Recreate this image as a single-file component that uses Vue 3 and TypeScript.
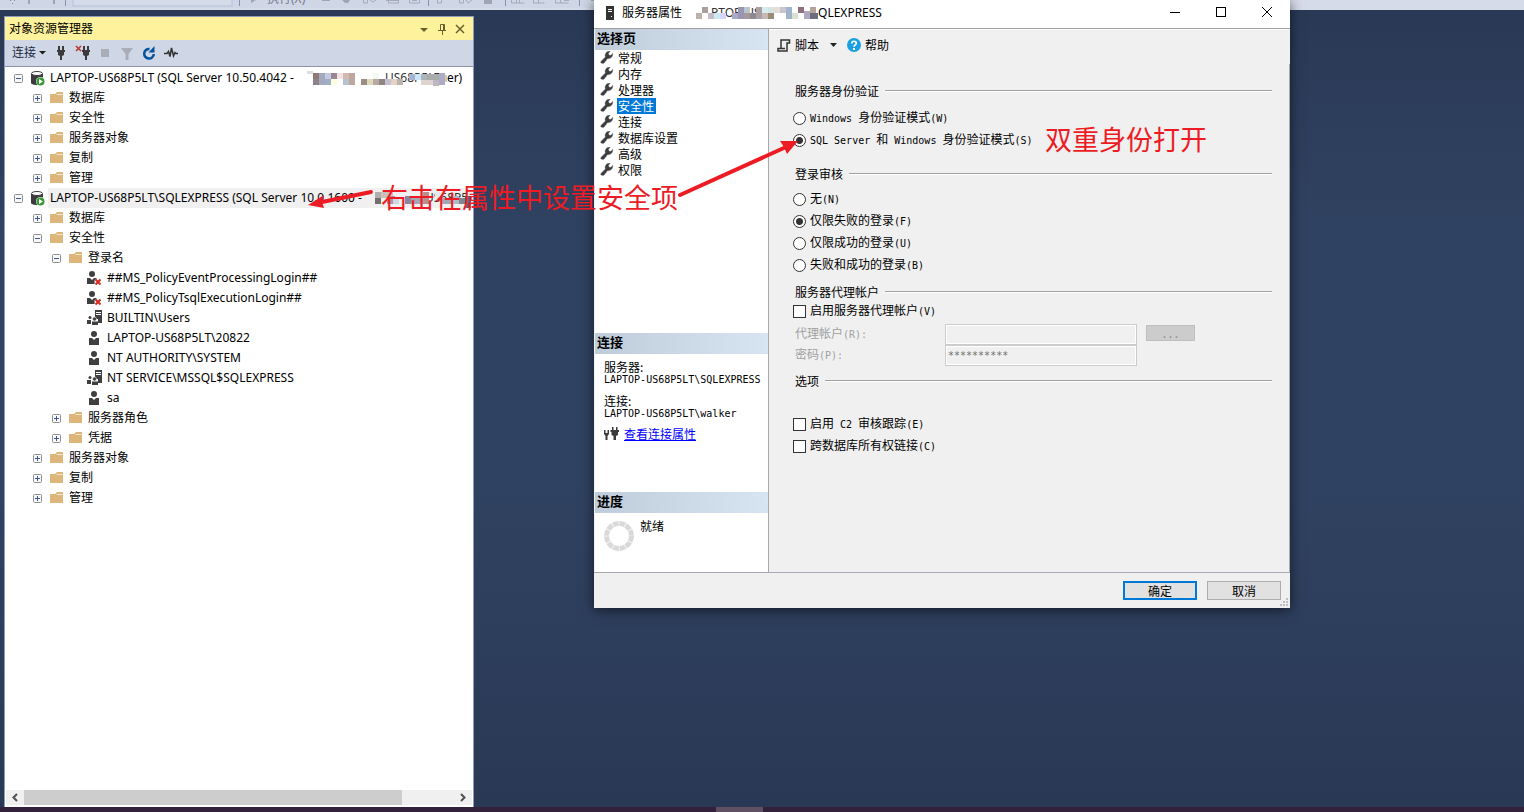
<script setup lang="ts">
import { ref } from 'vue'

type Kind = 'server' | 'folder' | 'user' | 'denied' | 'group'
type Tile = [number, number, number, number, string]
interface Node {
  level: number
  kind: Kind
  label: string
  open?: boolean
  tail?: string
  hidden?: string
  tiles?: Tile[]
  selected?: boolean
}

const firstTiles: Tile[] = [
  [0, 3, 6, 3, '#dddde3'], [6, 5, 6, 6, '#8f7a77'], [12, 5, 6, 12, '#a4a9bd'], [18, 5, 6, 6, '#c3cbe0'],
  [6, 11, 6, 6, '#8d8288'], [18, 11, 6, 6, '#9fb0c4'], [24, 5, 6, 6, '#9a8796'], [24, 11, 6, 6, '#fdfde0'],
  [36, 5, 6, 6, '#d6b9ae'], [36, 11, 6, 6, '#b5c4d0'], [42, 5, 6, 12, '#bda79f'], [30, 5, 6, 6, '#f1e3e1'],
  [54, 11, 6, 6, '#9b8d83'], [60, 11, 6, 6, '#e0dabd'], [66, 5, 6, 6, '#f2faf0'], [66, 11, 6, 6, '#b7a7a6'],
  [72, 11, 6, 6, '#8f877f'], [78, 11, 6, 6, '#c5bfd3'], [84, 11, 6, 6, '#e5d2c7'], [90, 11, 6, 6, '#b9b4ac'],
  [102, 6, 6, 6, '#a5b5cf'], [108, 6, 6, 6, '#cbe5fb'], [114, 6, 6, 6, '#abb5ba'], [120, 6, 12, 6, '#a9ada9'],
  [114, 12, 12, 5, '#dfd3cf'], [126, 12, 6, 6, '#bdb7c1'], [132, 5, 6, 12, '#b0abc4'], [138, 7, 5, 7, '#c9cdbb'],
]
const secondTiles: Tile[] = [
  [0, 4, 6, 6, '#b2aeab'], [0, 10, 6, 6, '#736d6c'], [6, 4, 12, 6, '#cdbfbd'], [12, 8, 8, 8, '#a89a9c'],
  [18, 10, 6, 6, '#cfd7e6'], [30, 8, 6, 8, '#8a86a0'], [36, 10, 12, 6, '#a7a4b5'], [48, 4, 6, 12, '#b4918e'],
  [60, 4, 6, 6, '#e5eaf0'], [66, 10, 12, 6, '#a3a7b3'], [78, 8, 6, 8, '#a9bcc9'], [84, 10, 6, 6, '#7f8791'],
  [90, 8, 6, 12, '#566682'],
]
const titleTiles: Tile[] = [
  [0, 7, 6, 6, '#bcb1ab'], [6, 1, 6, 6, '#a99f9e'], [12, 7, 6, 6, '#c5bccb'], [18, 7, 6, 6, '#cbebee'],
  [24, 7, 6, 6, '#d4d6fb'], [36, 7, 6, 6, '#aca8c7'], [42, 1, 6, 12, '#9b94b3'], [48, 1, 6, 6, '#b6c6cf'],
  [48, 7, 6, 6, '#a6999a'], [54, 7, 6, 6, '#8f8792'], [60, 1, 6, 12, '#a99fa5'], [66, 1, 6, 6, '#d9ecec'],
  [66, 7, 6, 6, '#c8b8b2'], [72, 1, 6, 6, '#d6e4e4'], [72, 7, 6, 6, '#9b8b7a'], [78, 1, 6, 6, '#e7ddd6'],
  [84, 1, 6, 6, '#c6c6ce'], [90, 1, 6, 12, '#a0b4cd'], [96, 7, 6, 6, '#dfdfd1'], [102, 1, 6, 6, '#8d707a'],
  [108, 5, 6, 8, '#b0a8c0'], [114, 1, 6, 6, '#b3a59b'], [114, 7, 8, 6, '#6f6e7b'], [30, 19, 16, 2, '#e8eef5'],
]

const nodes = ref<Node[]>([
  { level: 0, kind: 'server', open: true, label: 'LAPTOP-US68P5LT (SQL Server 10.50.4042 - ', tiles: firstTiles, hidden: 'US68P5LT\\', tail: 'er)' },
  { level: 1, kind: 'folder', open: false, label: '数据库' },
  { level: 1, kind: 'folder', open: false, label: '安全性' },
  { level: 1, kind: 'folder', open: false, label: '服务器对象' },
  { level: 1, kind: 'folder', open: false, label: '复制' },
  { level: 1, kind: 'folder', open: false, label: '管理' },
  { level: 0, kind: 'server', open: true, selected: true, label: 'LAPTOP-US68P5LT\\SQLEXPRESS (SQL Server 10.0.1600 - ', tiles: secondTiles, hidden: 'US68P5', tail: '' },
  { level: 1, kind: 'folder', open: false, label: '数据库' },
  { level: 1, kind: 'folder', open: true, label: '安全性' },
  { level: 2, kind: 'folder', open: true, label: '登录名' },
  { level: 3, kind: 'denied', label: '##MS_PolicyEventProcessingLogin##' },
  { level: 3, kind: 'denied', label: '##MS_PolicyTsqlExecutionLogin##' },
  { level: 3, kind: 'group', label: 'BUILTIN\\Users' },
  { level: 3, kind: 'user', label: 'LAPTOP-US68P5LT\\20822' },
  { level: 3, kind: 'user', label: 'NT AUTHORITY\\SYSTEM' },
  { level: 3, kind: 'group', label: 'NT SERVICE\\MSSQL$SQLEXPRESS' },
  { level: 3, kind: 'user', label: 'sa' },
  { level: 2, kind: 'folder', open: false, label: '服务器角色' },
  { level: 2, kind: 'folder', open: false, label: '凭据' },
  { level: 1, kind: 'folder', open: false, label: '服务器对象' },
  { level: 1, kind: 'folder', open: false, label: '复制' },
  { level: 1, kind: 'folder', open: false, label: '管理' },
])

const pages = ['常规', '内存', '处理器', '安全性', '连接', '数据库设置', '高级', '权限']
const page = ref('安全性')

const authModes = ['Windows 身份验证模式(W)', 'SQL Server 和 Windows 身份验证模式(S)']
const auth = ref(authModes[1])
const auditModes = ['无(N)', '仅限失败的登录(F)', '仅限成功的登录(U)', '失败和成功的登录(B)']
const audit = ref(auditModes[1])
const proxyEnabled = ref(false)
const password = ref('**********')
const account = ref('')
const options = ['启用 C2 审核跟踪(E)', '跨数据库所有权链接(C)']
const chosen = ref<string[]>([])

// Splits a label into Latin and Chinese runs; Latin runs use a half-width face.
function runs(text: string) {
  return (text.match(/[\x20-\x7e]+|[^\x20-\x7e]+/g) ?? []).map((t) => ({ t, latin: t.charCodeAt(0) < 127 }))
}
</script>

<template>
  <div class="desktop">
    <header class="topbar">
      <svg width="606" height="10" aria-hidden="true">
        <rect width="606" height="8" fill="#cfd6e5" />
        <g fill="#7d87a0"><rect x="10" y="0" width="1" height="1" /><rect x="14" y="0" width="1" height="1" /><rect x="12" y="3" width="1" height="1" /></g>
        <g fill="#9fa5b3">
          <rect x="28" width="2" height="4" /><rect x="53" width="2" height="4" />
          <path d="M251 0h5l-5 3z" /><rect x="322" width="8" height="1" /><path d="M342 0h8l-2 3h-3z" />
          <rect x="484" width="8" height="4" />
        </g>
        <rect x="73" y="-4" width="159" height="10" fill="#d5dbe9" stroke="#b4c3da" />
        <g fill="#8591ac"><rect x="65" width="1" height="6" /><rect x="239" width="1" height="6" /><rect x="428" width="1" height="6" /><rect x="505" width="1" height="6" /><rect x="579" width="1" height="6" /></g>
        <g fill="none" stroke="#a5abb8">
          <path d="M363.500 0v3h4V0M370 0l3 2 3-2M386 .500h13M388.500 0v3h10V0M409.500 0v3h10V0M412 .500h5M437.500 0v3h4V0M459.500 0v3h4V0M466 0l2 3 4-3" />
          <path d="M511.500 0v3h13M516.500 0v3M519.500 0v3M533.500 0v3h11M538.500 0v3M555.500 0v3h13M560.500 0v3M564 .500h5M591 .500h9" />
        </g>
        <text x="267" y="3" class="run">执行(X)</text>
      </svg>
    </header>

    <main class="workspace">
      <section class="explorer">
        <div class="caption">
          <h1>对象资源管理器</h1>
          <button type="button" aria-label="窗口位置"><svg width="10" height="12"><path d="M1 5h8l-4 4z" fill="#6b5f2e" /></svg></button>
          <button type="button" aria-label="自动隐藏"><svg width="10" height="12" fill="none" stroke="#6b5f2e"><path d="M3.500 7V1.500h4V7M6.500 2v5M1 7.500h8M5.500 8v4" /></svg></button>
          <button type="button" aria-label="关闭"><svg width="10" height="12" fill="none" stroke="#6b5f2e" stroke-width="1.500"><path d="M1 2l8 8M9 2l-8 8" /></svg></button>
        </div>
        <div class="tools">
          <button type="button" class="connect">连接<svg width="7" height="4"><path d="M0 0h7L3.500 3.500z" fill="#1e1e1e" /></svg></button>
          <button type="button" aria-label="连接服务器"><svg width="16" height="16" fill="#3b3b3b"><path d="M5 1h2v4h2V1h2v4h1v2h-1v3L9 11v4H7v-4l-2-1V7H4V5h1z" /></svg></button>
          <button type="button" aria-label="断开连接"><svg width="16" height="16" fill="#3b3b3b"><path d="M8 1h2v4h2V1h2v4h1v2h-1v3l-2 1v4h-2v-4l-2-1V7H7V5h1z" /><path d="M1 1l5 5M6 1L1 6" stroke="#b8352a" stroke-width="1.500" /></svg></button>
          <button type="button" aria-label="停止"><svg width="16" height="16"><rect x="4" y="4" width="8" height="8" fill="#a9adb8" /></svg></button>
          <button type="button" aria-label="筛选"><svg width="16" height="16"><path d="M2 3h12L9.500 9v6h-3V9z" fill="#a9adb8" /></svg></button>
          <button type="button" aria-label="刷新"><svg width="16" height="16"><path d="M8.500 4A4.800 4.800 0 1 0 12.800 9" fill="none" stroke="#00539c" stroke-width="2.500" /><path d="M13.500 1v6.500H7.500z" fill="#00539c" /></svg></button>
          <button type="button" aria-label="活动监视器"><svg width="16" height="16"><path d="M1 8.500h3l1.500-2 1.500 5L8.500 3l2 8 1.500-3.500 1 1h2" fill="none" stroke="#333" stroke-width="1.500" /></svg></button>
        </div>
        <ul class="tree" role="tree">
          <li v-for="(node, i) in nodes" :key="i" role="treeitem" class="row" :class="'level-' + node.level">
            <button v-if="node.open !== undefined" type="button" class="expander" :aria-label="node.open ? '折叠' : '展开'">
              <svg width="9" height="9"><rect x=".5" y=".5" width="8" height="8" rx="1" fill="#f8f8f8" stroke="#8f8f8f" /><path :d="node.open ? 'M2 4.500h5' : 'M2 4.500h5M4.500 2v5'" stroke="#3b569c" /></svg>
            </button>
            <span v-else class="expander" />
            <svg class="icon" width="16" height="16" aria-hidden="true">
              <g v-if="node.kind === 'folder'"><path d="M1 4h5l2-2h6v11H1z" fill="#dcb67a" /><path d="M7.500 4.500h6" stroke="#f6e7cb" /></g>
              <g v-else-if="node.kind === 'server'">
                <path d="M1 4v9c0 1 3 2 6 2s6-1 6-2V4z" fill="#3b3b3b" />
                <ellipse cx="7" cy="3.500" rx="5.500" ry="2" fill="#fff" stroke="#3b3b3b" />
                <circle cx="10.500" cy="11.500" r="4.500" fill="#fff" /><circle cx="10.500" cy="11.500" r="4" fill="#36982f" />
                <path d="M9 9v5l4-2.500z" fill="#fff" />
              </g>
              <g v-else-if="node.kind === 'group'" fill="#3f3f3f">
                <path d="M8 0h7v13h-4V9H8z" /><path d="M9 2.500h5M9 4.500h5" stroke="#fff" />
                <circle cx="3" cy="7.500" r="1.500" /><circle cx="7.500" cy="9" r="2" stroke="#fff" stroke-width=".5" />
                <path d="M0 10h5v4H0zM5 11.500h6V15H5z" /><path d="M4.500 9.500V14" stroke="#fff" />
              </g>
              <g v-else fill="#3f3f3f">
                <circle :cx="node.kind === 'user' ? 7 : 5" cy="4" r="3" />
                <path v-if="node.kind === 'user'" d="M2 8h3l2 2 2-2h3v7H2z" />
                <path v-else d="M0 8h3l2 2 2-2h3v6H0z" />
                <path v-if="node.kind === 'denied'" d="M8.500 9.500l5 5M13.500 9.500l-5 5" stroke="#fff" stroke-width="4" />
                <path v-if="node.kind === 'denied'" d="M8.500 9.500l5 5M13.500 9.500l-5 5" stroke="#d8291c" stroke-width="2" />
              </g>
            </svg>
            <span class="label" :class="{ selected: node.selected }">{{ node.label }}<svg v-if="node.tiles" class="mosaic" :width="node.tail ? 140 : 100" height="20" aria-hidden="true">
              <text :x="node.tail ? 78 : 50" y="14" class="under">{{ node.hidden }}</text>
              <rect v-for="(t, k) in node.tiles" :key="k" :x="t[0]" :y="t[1]" :width="t[2]" :height="t[3]" :fill="t[4]" />
            </svg>{{ node.tail }}</span>
          </li>
        </ul>
        <div class="scroll">
          <svg width="18" height="15" fill="none" stroke="#505050" stroke-width="2"><path d="M11 4L7.500 7.500 11 11" /></svg>
          <div class="track"><div class="thumb" /></div>
          <svg width="18" height="15" fill="none" stroke="#505050" stroke-width="2"><path d="M7 4l3.500 3.500L7 11" /></svg>
        </div>
      </section>
    </main>

    <footer class="taskbar"><span /></footer>

    <section class="dialog" role="dialog" aria-label="服务器属性">
      <div class="titlebar">
        <svg width="8" height="14" aria-hidden="true"><rect width="8" height="14" fill="#333" /><path d="M2 3.500h4M2 5.500h4" stroke="#fff" /><rect x="5" y="10" width="1" height="1" fill="#fff" /></svg>
        <h2>服务器属性</h2>
        <svg class="title-mosaic" width="122" height="22" aria-hidden="true">
          <text x="15" y="14" class="under">PTOP-US</text>
          <rect v-for="(t, k) in titleTiles" :key="k" :x="t[0]" :y="t[1] + 3" :width="t[2]" :height="t[3]" :fill="t[4]" />
        </svg>
        <span class="instance">QLEXPRESS</span>
        <div class="window-buttons">
          <button type="button" aria-label="最小化"><svg width="10" height="10"><path d="M0 5.500h10" stroke="#000" /></svg></button>
          <button type="button" aria-label="最大化"><svg width="10" height="10"><rect x=".5" y=".5" width="9" height="9" fill="none" stroke="#000" /></svg></button>
          <button type="button" aria-label="关闭"><svg width="10" height="10"><path d="M0 0l10 10M10 0L0 10" stroke="#000" /></svg></button>
        </div>
      </div>

      <div class="body">
        <aside class="side">
          <section class="pane pages">
            <h3>选择页</h3>
            <ul>
              <li v-for="p in pages" :key="p">
                <svg width="14" height="14" aria-hidden="true"><path d="M1 10.500L5.500 6C4.500 3 6.500 0 10 .2L8.300 2.500l.7 1.800 2 .2L12.500 2.600c.6 3-2 5.500-5 4.800L4 12c-1.500 1-4-.2-3-1.500z" fill="#3d3d3d" stroke="#3d3d3d" stroke-width=".5" /></svg>
                <button type="button" :class="{ active: p === page }" @click="page = p">{{ p }}</button>
              </li>
            </ul>
          </section>
          <section class="pane connection">
            <h3>连接</h3>
            <dl>
              <dt>服务器:</dt><dd>LAPTOP-US68P5LT\SQLEXPRESS</dd>
              <dt>连接:</dt><dd>LAPTOP-US68P5LT\walker</dd>
            </dl>
            <p>
              <svg width="15" height="14" fill="#3b3b3b" aria-hidden="true"><path d="M0 3h1.500v3h2V3H5v4L3.500 9v4h-2V9L0 7zM8 0h1.500v3H12V0h1.500v3H15v2h-1v3l-2 1v4h-2.500V9l-2-1V5h-1V3H8z" /></svg>
              <a href="#">查看连接属性</a>
            </p>
          </section>
          <section class="pane progress">
            <h3>进度</h3>
            <p>
              <svg width="30" height="30" aria-hidden="true"><circle cx="15" cy="15" r="12.500" fill="none" stroke="#d9d9d9" stroke-width="5" stroke-dasharray="5.800 .745" /></svg>
              <span>就绪</span>
            </p>
          </section>
        </aside>

        <div class="content">
          <div class="actions">
            <button type="button"><svg width="14" height="13" fill="none" stroke="#333" stroke-width="1.500"><path d="M4 9V1h8.500v3H10v8H1V9.500h7" /></svg>脚本</button>
            <button type="button" class="drop" aria-label="脚本选项"><svg width="7" height="4"><path d="M0 0h7L3.500 4z" fill="#222" /></svg></button>
            <button type="button" class="help"><svg width="14" height="14"><circle cx="7" cy="7" r="7" fill="#1ba1e2" /><path d="M4.800 5.500C4.800 2.500 9.300 2.600 9.300 5.200 9.300 7 7 6.800 7 8.800" fill="none" stroke="#fff" stroke-width="1.700" /><rect x="6" y="10" width="2" height="2" fill="#fff" /></svg>帮助</button>
          </div>
          <form class="form" @submit.prevent>
            <h4>服务器身份验证</h4>
            <div class="set auth">
              <label v-for="m in authModes" :key="m"><input v-model="auth" type="radio" name="auth" :value="m"><span class="mixed"><span v-for="(r, k) in runs(m)" :key="k" :class="{ latin: r.latin }">{{ r.t }}</span></span></label>
            </div>
            <h4>登录审核</h4>
            <div class="set audit">
              <label v-for="m in auditModes" :key="m"><input v-model="audit" type="radio" name="audit" :value="m"><span class="mixed"><span v-for="(r, k) in runs(m)" :key="k" :class="{ latin: r.latin }">{{ r.t }}</span></span></label>
            </div>
            <h4>服务器代理帐户</h4>
            <div class="set">
              <label><input v-model="proxyEnabled" type="checkbox"><span class="mixed"><span v-for="(r, k) in runs('启用服务器代理帐户(V)')" :key="k" :class="{ latin: r.latin }">{{ r.t }}</span></span></label>
            </div>
            <div class="fields">
              <label for="account">代理帐户<span class="latin">(R):</span></label>
              <input id="account" v-model="account" type="text" disabled>
              <button type="button" disabled>. . .</button>
              <label for="password">密码<span class="latin">(P):</span></label>
              <input id="password" v-model="password" type="text" disabled>
            </div>
            <h4>选项</h4>
            <div class="set options">
              <label v-for="o in options" :key="o"><input v-model="chosen" type="checkbox" :value="o"><span class="mixed"><span v-for="(r, k) in runs(o)" :key="k" :class="{ latin: r.latin }">{{ r.t }}</span></span></label>
            </div>
          </form>
        </div>
      </div>

      <div class="commands">
        <button type="button" class="ok">确定</button>
        <button type="button">取消</button>
        <svg class="grip" width="8" height="8" fill="#bfbfbf" aria-hidden="true"><path d="M6 0h2v2H6zM3 3h2v2H3zM6 3h2v2H6zM0 6h2v2H0zM3 6h2v2H3zM6 6h2v2H6z" /></svg>
      </div>
    </section>

    <div class="notes">
      <svg width="820" height="220" aria-hidden="true">
        <path d="M371 192L322 202" stroke="#ed1c24" stroke-width="4" stroke-linecap="round" />
        <path d="M308 205L324 195 322 202 324 208z" fill="#ed1c24" />
        <path d="M680 195L786 147" stroke="#ed1c24" stroke-width="4" stroke-linecap="round" />
        <path d="M798 141L780 141 784 147 787 154z" fill="#ed1c24" />
      </svg>
      <p class="note first">右击在属性中设置安全项</p>
      <p class="note second">双重身份打开</p>
    </div>
  </div>
</template>

<style>
html, body { margin: 0; overflow: hidden; }
</style>

<style scoped>
.desktop {
  position: relative; display: flex; flex-direction: column; height: 100vh; overflow: hidden;
  background: linear-gradient(#293955, #304261 28%, #304261 60%, #293955);
  font: 12px/16px "Noto Sans", "Noto Sans CJK SC", sans-serif; color: #000;
}
h1, h2, h3, h4, p, ul, dl, dd { margin: 0; padding: 0; font-size: 12px; font-weight: 400; }
ul { list-style: none; }
svg { display: block; flex: none; }
button { font: inherit; color: inherit; padding: 0; border: 0; background: none; display: flex; align-items: center; justify-content: center; }
.topbar { height: 10px; flex: none; background: #d6dbe9; overflow: hidden; }
.run { font-size: 12px; fill: #747b8a; }
.workspace { flex: 1; min-height: 0; display: flex; padding: 6px 0 0 4px; }
.explorer { width: 31%; min-width: 470px; max-width: 470px; box-sizing: border-box; display: flex; flex-direction: column; border: 1px solid #8e9bbc; border-bottom: 0; background: #fff; }
.caption { height: 23px; flex: none; display: flex; align-items: center; gap: 8px; padding: 0 8px 0 4px; background: #fff29d; }
.caption h1 { flex: 1; }
.tools { height: 26px; flex: none; display: flex; align-items: center; gap: 6px; padding-left: 7px; background: #cfd6e5; border-bottom: 1px solid #8e94a3; }
.connect { gap: 3px; color: #1b293e; margin-right: 1px; }
.tree { flex: 1; min-height: 0; overflow: hidden; padding-top: 1px; }
.row { display: flex; align-items: center; height: 20px; padding-left: 9px; }
.level-1 { padding-left: 28px; }
.level-2 { padding-left: 47px; }
.level-3 { padding-left: 66px; }
.expander { width: 9px; flex: none; margin-right: 7px; }
.label { display: flex; flex: 1; min-width: 0; overflow: hidden; margin-left: 2px; padding-left: 2px; line-height: 20px; white-space: pre; }
.selected { background: #f0f0f0; }
.mosaic { margin-left: 10px; }
.under { font-size: 12px; fill: #333; }
.scroll { height: 15px; flex: none; display: flex; background: #f0f0f0; margin: 0 1px 2px; }
.track { flex: 1; }
.thumb { width: 88%; height: 100%; background: #cdcdcd; }
.taskbar { height: 5px; flex: none; background: #33203b; padding-left: 47%; }
.taskbar span { display: block; width: 47px; height: 5px; background: #5f5064; }

.dialog { position: absolute; left: 594px; top: 0; width: 696px; display: flex; flex-direction: column; background: #f0f0f0; box-shadow: 0 2px 12px rgba(0, 0, 0, .6); font-family: "Noto Sans CJK SC", sans-serif; }
.titlebar { height: 28px; display: flex; align-items: center; padding-left: 12px; background: #fff; border-bottom: 1px solid #a0a0a0; font-family: "Noto Sans", "Noto Sans CJK SC", sans-serif; }
.titlebar > svg:first-child { margin-bottom: 3px; }
.titlebar h2 { margin: 0 14px 0 8px; padding-bottom: 2px; }
.instance { padding-bottom: 2px; }
.window-buttons { display: flex; margin-left: auto; padding-bottom: 4px; }
.window-buttons button { width: 46px; height: 24px; }
.body { display: flex; border-bottom: 1px solid #a8a8b0; }
.side { width: 173px; flex: none; margin-left: 1px; display: flex; flex-direction: column; background: #fff; border-right: 1px solid #a8a8b0; }
.pane h3 { height: 21px; padding-left: 2px; font-size: 13px; line-height: 17px; font-weight: 700; background: linear-gradient(90deg, #bfcddb, #d7e4f2); }
.pages { min-height: 304px; }
.connection { min-height: 159px; }
.progress { min-height: 80px; }
.pages li { display: flex; align-items: center; height: 16px; padding-left: 5px; gap: 3px; }
.pages li button { height: 16px; padding: 0 2px 0 1px; }
.pages li .active { background: #0078d7; color: #fff; }
.connection dl { padding: 6px 0 0 9px; }
.connection dt { line-height: 14px; }
.connection dd { font: 10px/12px "DejaVu Sans Mono", monospace; margin-bottom: 8px; }
.connection dd:last-child { margin-bottom: 6px; }
.connection p { display: flex; align-items: center; gap: 5px; padding-left: 9px; }
.connection a { color: #00f; }
.progress p { display: flex; padding: 8px 9px; gap: 6px; }
.progress span { margin-top: -3px; }
.content { flex: 1; display: flex; flex-direction: column; border-top: 1px solid #fff; }
.actions { height: 34px; display: flex; align-items: center; padding: 0 0 4px 8px; box-sizing: border-box; }
.actions button { gap: 4px; }
.actions .drop { width: 28px; }
.form { flex: 1; padding: 19px 17px 0 24px; border-right: 1px solid #a8a8b0; }
.form h4 { display: flex; align-items: center; gap: 6px; padding-left: 2px; height: 16px; }
.form h4::after { content: ""; flex: 1; height: 1px; background: #a0a0a0; border-bottom: 1px solid #fff; }
.set label { display: flex; align-items: center; gap: 4px; height: 22px; }
.auth { padding: 8px 0 15px; }
.audit { padding: 6px 0 8px; }
.options { padding-top: 24px; }
.mixed { white-space: pre; }
.latin { font-family: "DejaVu Sans Mono", monospace; font-size: 10px; }
.set input { appearance: none; width: 13px; height: 13px; margin: 0; box-sizing: border-box; border: 1px solid #333; background: #fff; }
.set input[type="radio"] { border-radius: 50%; }
.set input[type="radio"]:checked { background: radial-gradient(circle, #333 0 3px, #fff 4px); }
.fields { display: grid; grid-template-columns: 150px 192px 58px; grid-auto-rows: 21px; padding: 2px 0 7px 2px; color: #a0a0a0; }
.fields label { line-height: 18px; }
.fields input { box-sizing: border-box; width: 100%; height: 21px; border: 1px solid #ccc; box-shadow: inset 0 0 0 1px #fff; background: #f0f0f0; color: #6d6d6d; padding: 0 2px; font: 10px "DejaVu Sans Mono", monospace; }
.fields button { margin: 1px 0 0 9px; width: 49px; height: 16px; border: 1px solid #bfbfbf; background: #ccc; color: #8d8d8d; }
.commands { position: relative; display: flex; justify-content: flex-end; gap: 10px; padding: 8px 9px 8px 0; }
.commands button { width: 74px; height: 19px; box-sizing: border-box; border: 1px solid #adadad; background: #e1e1e1; }
.commands .ok { border: 2px solid #0078d7; }
.grip { position: absolute; right: 2px; bottom: 2px; }

.notes { position: absolute; inset: 0; pointer-events: none; }
.note { position: absolute; font: 27px/32px "Noto Sans CJK SC", sans-serif; color: #ed1c24; white-space: nowrap; }
.first { left: 381px; top: 181px; }
.second { left: 1045px; top: 123px; }
</style>
